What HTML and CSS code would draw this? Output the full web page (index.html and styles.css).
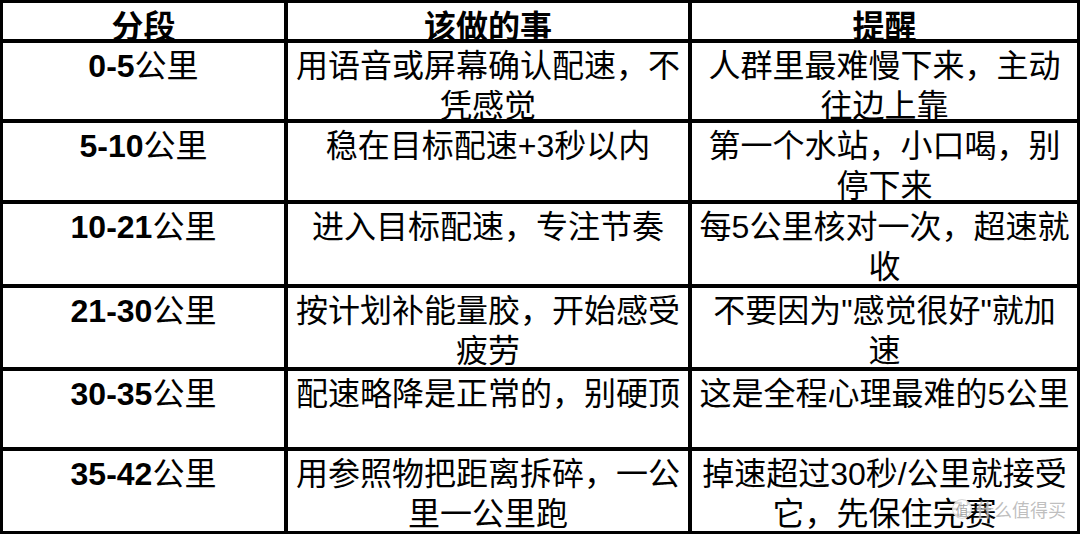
FILE: index.html
```html
<!DOCTYPE html>
<html lang="zh-CN">
<head>
<meta charset="utf-8">
<title>马拉松分段配速</title>
<link rel="stylesheet" href="styles.css">
</head>
<body>
<div class="page">
  <div class="sheet">
    <div class="cell head">分段</div>
    <div class="cell head">该做的事</div>
    <div class="cell head">提醒</div>

    <div class="cell seg"><span class="num">0-5</span>公里</div>
    <div class="cell">用语音或屏幕确认配速，不<br>凭感觉</div>
    <div class="cell">人群里最难慢下来，主动<br>往边上靠</div>

    <div class="cell seg"><span class="num">5-10</span>公里</div>
    <div class="cell">稳在目标配速+3秒以内</div>
    <div class="cell">第一个水站，小口喝，别<br>停下来</div>

    <div class="cell seg"><span class="num">10-21</span>公里</div>
    <div class="cell">进入目标配速，专注节奏</div>
    <div class="cell">每5公里核对一次，超速就<br>收</div>

    <div class="cell seg"><span class="num">21-30</span>公里</div>
    <div class="cell">按计划补能量胶，开始感受<br>疲劳</div>
    <div class="cell">不要因为"感觉很好"就加<br>速</div>

    <div class="cell seg"><span class="num">30-35</span>公里</div>
    <div class="cell">配速略降是正常的，别硬顶</div>
    <div class="cell">这是全程心理最难的5公里</div>

    <div class="cell seg"><span class="num">35-42</span>公里</div>
    <div class="cell">用参照物把距离拆碎，一公<br>里一公里跑</div>
    <div class="cell">掉速超过30秒/公里就接受<br>它，先保住完赛</div>
  </div>
  <div class="watermark"><span class="wm-logo">值</span><span class="wm-text">什么值得买</span></div>
</div>
</body>
</html>
```

FILE: styles.css
```css
html, body {
  margin: 0;
  padding: 0;
  background: #ffffff;
}

.page {
  position: relative;
  width: 1080px;
  height: 535px;
  overflow: hidden;
}

.sheet {
  display: grid;
  grid-template-columns: 281px 400px 385px;
  grid-template-rows: 36px 76px 77px 80px 79px 76px 80px;
  gap: 4px;
  padding: 3px;
  width: 1080px;
  box-sizing: border-box;
  background: #000000;
}

.cell {
  background: #ffffff;
  color: #000000;
  overflow: hidden;
  text-align: center;
  white-space: nowrap;
  font-family: "Liberation Sans", "Noto Sans CJK SC", sans-serif;
  font-size: 32px;
  line-height: 40px;
  padding-top: 3px;
  box-sizing: border-box;
}

.head {
  font-weight: bold;
  padding-top: 4px;
}

.num {
  font-weight: bold;
}

.watermark {
  position: absolute;
  left: 952px;
  top: 499px;
  display: flex;
  align-items: center;
  gap: 4px;
  font-family: "Noto Sans CJK SC", sans-serif;
  color: rgba(170, 170, 170, 0.75);
}

.wm-logo {
  width: 20px;
  height: 20px;
  border-radius: 50%;
  background: rgba(255, 255, 255, 0.85);
  border: 1px solid rgba(190, 190, 190, 0.6);
  font-size: 13px;
  line-height: 20px;
  text-align: center;
  color: rgba(140, 140, 140, 0.8);
  box-sizing: border-box;
}

.wm-text {
  font-size: 18px;
  line-height: 20px;
  text-shadow: 0 0 2px #ffffff;
}
```
